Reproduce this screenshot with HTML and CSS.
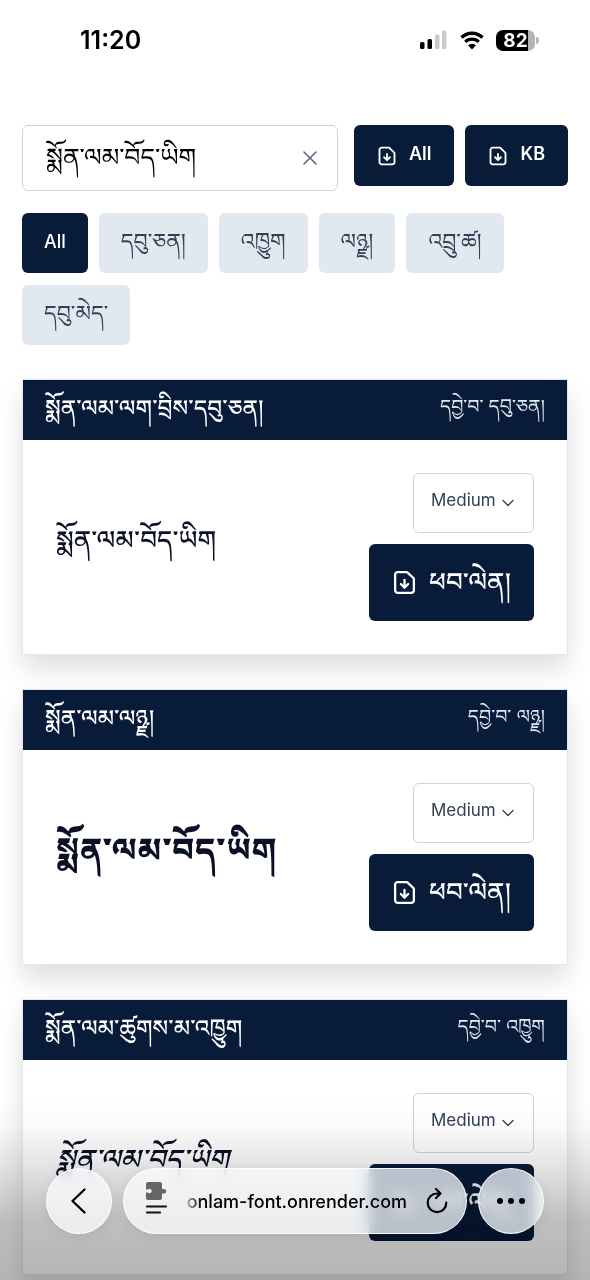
FILE: index.html
```html
<!DOCTYPE html>
<html lang="bo">
<head>
<meta charset="utf-8">
<meta name="viewport" content="width=device-width, initial-scale=1">
<title>Monlam Font</title>
<link rel="stylesheet" href="styles.css">
</head>
<body>
<svg class="defs" aria-hidden="true">
  <symbol id="file-down" viewBox="0 0 24 24">
    <path d="M6 2h8.500L21 8.200V19.500a2.500 2.500 0 0 1-2.500 2.500H5.500A2.500 2.500 0 0 1 3 19.500V4.500A2.500 2.500 0 0 1 5.500 2zM12 9.500v7m-3.500-3 3.500 3.500 3.500-3.500" fill="none" stroke="currentColor" stroke-width="2.200" stroke-linecap="round" stroke-linejoin="round"/>
  </symbol>
  <symbol id="chevron" viewBox="0 0 12 8">
    <path d="M1 1.500 6 6.500 11 1.500" fill="none" stroke="currentColor" stroke-width="1.300" stroke-linecap="round" stroke-linejoin="round"/>
  </symbol>
</svg>

<header class="status">
  <span class="status-time">11:20</span>
  <div class="status-icons">
    <svg width="28" height="20" viewBox="0 0 28 20" aria-hidden="true">
      <rect x="0" y="12" width="4.500" height="7" rx="1.500"/>
      <rect x="7.500" y="9" width="4.500" height="10" rx="1.500"/>
      <g fill="#cacaca"><rect x="15" y="4.500" width="4.500" height="14.500" rx="1.500"/><rect x="22" y="0.500" width="4.500" height="18.500" rx="1.500"/></g>
    </svg>
    <svg width="24" height="20" viewBox="0 0 24 20" aria-hidden="true">
      <g fill="none" stroke="#000" stroke-width="3.400">
        <path d="M1.500 7.500a15 15 0 0 1 21 0"/>
        <path d="M5.300 11.900a9.500 9.500 0 0 1 13.400 0"/>
      </g>
      <path d="M8 15.200a6 6 0 0 1 8 0l-4 4.300z"/>
    </svg>
    <span class="battery"><span class="battery-body">82</span><span class="battery-cap"></span></span>
  </div>
</header>

<main class="page">
  <form class="toolbar">
    <div class="search">
      <input class="search-input" type="text" value="སྨོན་ལམ་བོད་ཡིག" aria-label="Preview text">
      <button class="clear" type="button" aria-label="Clear">
        <svg width="14" height="14" viewBox="0 0 14 14" aria-hidden="true"><path d="M1 1l12 12M13 1L1 13" stroke="currentColor" stroke-width="1.500" stroke-linecap="round"/></svg>
      </button>
    </div>
    <div class="actions">
      <button class="action" type="button"><svg class="icon"><use href="#file-down"/></svg><span>All</span></button>
      <button class="action" type="button"><svg class="icon"><use href="#file-down"/></svg><span>KB</span></button>
    </div>
  </form>

  <nav class="filters">
    <button class="chip chip-active" type="button">All</button>
    <button class="chip" type="button">དབུ་ཅན།</button>
    <button class="chip" type="button">འཁྱུག</button>
    <button class="chip" type="button">ལཉྫ།</button>
    <button class="chip" type="button">འབྲུ་ཚ།</button>
    <button class="chip" type="button">དབུ་མེད་</button>
  </nav>

  <section class="cards">
    <article class="card">
      <header class="card-head"><h2 class="card-title">སྨོན་ལམ་ལག་བྲིས་དབུ་ཅན།</h2><span class="card-type">དབྱེ་བ་ དབུ་ཅན།</span></header>
      <div class="card-body">
        <p class="sample sample-uchen">སྨོན་ལམ་བོད་ཡིག</p>
        <div class="card-side">
          <label class="weight"><select class="weight-select" aria-label="Weight"><option>Medium</option></select><svg class="weight-arrow"><use href="#chevron"/></svg></label>
          <button class="download" type="button"><svg class="icon-lg"><use href="#file-down"/></svg><span>ཕབ་ལེན།</span></button>
        </div>
      </div>
    </article>
    <article class="card">
      <header class="card-head"><h2 class="card-title">སྨོན་ལམ་ལཉྫ།</h2><span class="card-type">དབྱེ་བ་ ལཉྫ།</span></header>
      <div class="card-body">
        <p class="sample sample-lantsa">སྨོན་ལམ་བོད་ཡིག</p>
        <div class="card-side">
          <label class="weight"><select class="weight-select" aria-label="Weight"><option>Medium</option></select><svg class="weight-arrow"><use href="#chevron"/></svg></label>
          <button class="download" type="button"><svg class="icon-lg"><use href="#file-down"/></svg><span>ཕབ་ལེན།</span></button>
        </div>
      </div>
    </article>
    <article class="card">
      <header class="card-head"><h2 class="card-title">སྨོན་ལམ་ཚུགས་མ་འཁྱུག</h2><span class="card-type">དབྱེ་བ་ འཁྱུག</span></header>
      <div class="card-body">
        <p class="sample sample-cursive">སྨོན་ལམ་བོད་ཡིག</p>
        <div class="card-side">
          <label class="weight"><select class="weight-select" aria-label="Weight"><option>Medium</option></select><svg class="weight-arrow"><use href="#chevron"/></svg></label>
          <button class="download" type="button"><svg class="icon-lg"><use href="#file-down"/></svg><span>ཕབ་ལེན།</span></button>
        </div>
      </div>
    </article>
  </section>
</main>

<footer class="browser">
  <button class="round" type="button" aria-label="Back">
    <svg width="16" height="26" viewBox="0 0 16 26" aria-hidden="true"><path d="M13.500 1.500 1.500 13l12 11.500" fill="none" stroke="currentColor" stroke-width="2.300" stroke-linecap="round" stroke-linejoin="round"/></svg>
  </button>
  <div class="address">
    <button class="bare" type="button" aria-label="Page menu">
      <svg width="24" height="32" viewBox="0 0 24 32" aria-hidden="true">
        <path fill="#666" d="M3 0h12a2 2 0 0 1 2 2v5h1.500a2.300 2.300 0 1 1 0 4.500H17V16a2 2 0 0 1-2 2H3a2 2 0 0 1-2-2v-5.500h2a2.200 2.200 0 1 0 0-3H1V2a2 2 0 0 1 2-2z"/>
        <path d="M2 24.500h19M2 30.500h13" stroke="#111" stroke-width="2.200" stroke-linecap="round"/>
      </svg>
    </button>
    <span class="url">onlam-font.onrender.com</span>
    <button class="bare" type="button" aria-label="Reload">
      <svg width="22" height="26" viewBox="0 0 22 26" aria-hidden="true"><path d="M13.500 5.500H11A9.300 9.300 0 1 0 20.300 14.500M10 1l4.500 4.500L10 10" fill="none" stroke="currentColor" stroke-width="2.200" stroke-linecap="round" stroke-linejoin="round"/></svg>
    </button>
  </div>
  <button class="round" type="button" aria-label="More">
    <svg width="28" height="6" viewBox="0 0 28 6" aria-hidden="true"><circle cx="3" cy="3" r="3"/><circle cx="14" cy="3" r="3"/><circle cx="25" cy="3" r="3"/></svg>
  </button>
</footer>
</body>
</html>
```
FILE: styles.css
```css
:root {
  --navy: #081c3a;
  --slate: #334155;
  --line: #cbd5e1;
  --chip: #e2e8f0;
}

* { box-sizing: border-box; }

body {
  margin: 0;
  min-height: 100vh;
  background: #fff;
  color: #0f172a;
  font-family: Inter, "Noto Serif Tibetan", "Noto Sans Tibetan", "Jomolhari", "Noto Sans", sans-serif;
  font-size: 17px;
}

button, input, select { font: inherit; color: inherit; margin: 0; }
button { border: 0; cursor: pointer; }
h2, p { margin: 0; }
.defs { position: absolute; width: 0; height: 0; }

.status {
  display: flex;
  justify-content: space-between;
  align-items: center;
  height: 80px;
  padding: 0 51px 0 80px;
  color: #000;
}
.status-time { font-size: 25px; font-weight: 600; }
.status-icons { display: flex; align-items: center; gap: 12px; }
.battery { display: flex; align-items: center; gap: 1px; }
.battery-body {
  width: 39px;
  border-radius: 7px;
  background: linear-gradient(90deg, #000 82%, #b5b5b5 82%);
  color: #fff;
  font-size: 19px;
  font-weight: 700;
  line-height: 21px;
  text-align: center;
}
.battery-cap { width: 3px; height: 7px; border-radius: 0 3px 3px 0; background: #b5b5b5; }

.page { padding: 45px 22px 4px; }

.toolbar { display: flex; align-items: flex-start; gap: 16px; }
.search {
  display: flex;
  align-items: center;
  flex: 1;
  min-width: 0;
  height: 66px;
  padding: 0 16px 0 23px;
  border: 1px solid var(--line);
  border-radius: 6px;
}
.search-input {
  flex: 1;
  min-width: 0;
  height: 64px;
  padding: 12px 0 0;
  border: 0;
  outline: 0;
  background: none;
  color: #000;
  font-size: 25px;
}
.clear { display: flex; padding: 4px; background: none; color: #56637a; }
.actions { display: flex; gap: 11px; }
.action {
  display: flex;
  align-items: center;
  gap: 12px;
  height: 61px;
  padding: 0 23px 4px;
  border-radius: 6px;
  background: var(--navy);
  color: #fff;
  font-size: 18px;
  font-weight: 600;
}
.icon { width: 20px; height: 20px; margin-top: 4px; }

.filters { display: flex; flex-wrap: wrap; gap: 12px 11px; margin-top: 22px; }
.chip {
  height: 60px;
  padding: 4px 22px 0;
  border-radius: 6px;
  background: var(--chip);
  color: var(--slate);
  font-size: 22px;
}
.chip-active { padding: 0 22px 4px; background: var(--navy); color: #fff; font-size: 18px; font-weight: 500; }

.cards { display: flex; flex-direction: column; gap: 34px; margin-top: 34px; }
.card {
  border: 1px solid var(--chip);
  background: #fff;
  box-shadow: 0 14px 24px rgba(0, 0, 0, .13);
}
.card-head {
  display: flex;
  align-items: center;
  justify-content: space-between;
  height: 60px;
  padding: 4px 22px 0;
  background: var(--navy);
  color: #fff;
}
.card-title { padding-top: 4px; font-size: 23px; font-weight: 500; white-space: nowrap; }
.card-type { color: var(--chip); font-size: 19px; white-space: nowrap; }
.card-body {
  display: flex;
  align-items: center;
  justify-content: space-between;
  padding: 33px;
}
.card-side { display: flex; flex-direction: column; align-items: flex-end; gap: 11px; }
.sample { white-space: nowrap; color: #0b1026; font-size: 26px; font-weight: 500; }
.sample-lantsa { padding-top: 4px; font-size: 33px; font-weight: 800; }
.sample-cursive { font-size: 28px; font-style: italic; }

.weight { display: block; position: relative; color: var(--slate); }
.weight-select {
  appearance: none;
  display: block;
  width: 121px;
  height: 60px;
  padding: 0 34px 6px 17px;
  border: 1px solid var(--line);
  border-radius: 6px;
  background: none;
}
.weight-arrow { position: absolute; right: 20px; top: 26px; width: 12px; height: 8px; pointer-events: none; }
.download {
  display: flex;
  align-items: center;
  gap: 12px;
  height: 77px;
  padding: 0 23px;
  border-radius: 6px;
  background: var(--navy);
  color: #fff;
  font-size: 26px;
  font-weight: 500;
}
.download span { padding-top: 14px; }
.icon-lg { width: 25px; height: 25px; }

.browser {
  position: fixed;
  left: 0;
  right: 0;
  bottom: 0;
  display: flex;
  align-items: center;
  gap: 11px;
  padding: 70px 46px 46px;
  background: linear-gradient(rgba(0, 0, 0, 0), rgba(0, 0, 0, .02) 15%, rgba(0, 0, 0, .11) 38%, rgba(0, 0, 0, .25) 68%, rgba(0, 0, 0, .29));
  color: #000;
}
.round, .address {
  height: 66px;
  border: 1px solid rgba(255, 255, 255, .9);
  border-radius: 33px;
  background: rgba(250, 252, 255, .74);
  backdrop-filter: blur(7px) saturate(1.5);
  box-shadow: 0 2px 14px rgba(0, 0, 0, .08);
}
.round { display: flex; flex: none; align-items: center; justify-content: center; width: 66px; padding: 0; }
.address { display: flex; flex: 1; min-width: 0; align-items: center; justify-content: space-between; padding: 0 18px 0 21px; }
.bare { display: flex; flex: none; padding: 0; background: none; }
.bare:first-child { margin-bottom: 6px; }
.url {
  font-size: 18px;
  font-weight: 500;
  white-space: nowrap;
  margin-left: auto;
  margin-right: 19px;
  background: linear-gradient(90deg, #aaa, #000 14px);
  background-clip: text;
  color: transparent;
}
```
